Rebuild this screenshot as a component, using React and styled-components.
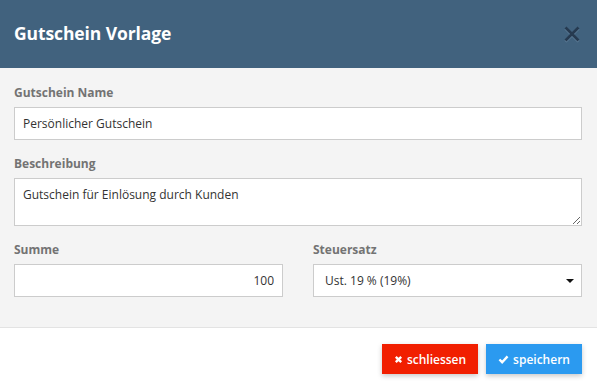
import React from "react";
import styled, { createGlobalStyle } from "styled-components";

const GlobalStyle = createGlobalStyle`
  html, body {
    margin: 0;
    padding: 0;
    background: #ffffff;
  }
  body {
    font-family: "Open Sans", "Liberation Sans", Arial, sans-serif;
  }
  * { box-sizing: border-box; }
`;

const Modal = styled.div`
  width: 597px;
  height: 388px;
  display: flex;
  flex-direction: column;
  background: #fff;
  overflow: hidden;
`;

const Header = styled.div`
  height: 68px;
  background-color: #41627e;
  display: flex;
  align-items: center;
  justify-content: space-between;
  padding: 0 17px 0 14px;
`;

const Title = styled.h4`
  margin: 0 0 2px 0;
  color: #fff;
  font-size: 17.5px;
  font-weight: 700;
  letter-spacing: -0.1px;
`;

const Close = styled.button`
  border: 0;
  background: transparent;
  padding: 0;
  width: 17px;
  height: 18px;
  display: flex;
  align-items: center;
  justify-content: center;
  cursor: pointer;
`;

const Body = styled.div`
  background-color: #f4f4f4;
  padding: 16px 15px 30px 14px;
  border-bottom: 1px solid #e3e3e3;
`;

const Group = styled.div`
  margin: ${props => props.margin ? props.margin : "0 0 15px 0"};
`;

const Row = styled.div`
  display: grid;
  grid-template-columns: 1fr 1fr;
  column-gap: 30px;
`;

const Label = styled.label`
  display: block;
  color: #737373;
  font-size: 12px;
  font-weight: 700;
  line-height: 17px;
  margin: 0 0 6px 0;
`;

const Input = styled.input`
  display: block;
  width: 100%;
  height: 33px;
  padding: 0 8px;
  border: 1px solid #cccccc;
  border-radius: 0;
  background: #fff;
  color: #333;
  font-family: inherit;
  font-size: 12px;
  text-align: ${props => props.right ? "right" : "left"};
  outline: none;
`;

const TextArea = styled.textarea`
  display: block;
  width: 100%;
  height: 48px;
  padding: 7px 8px;
  border: 1px solid #cccccc;
  border-radius: 0;
  background: #fff;
  color: #333;
  font-family: inherit;
  font-size: 12px;
  line-height: 17px;
  resize: vertical;
  outline: none;
`;

const Select = styled.div`
  height: 33px;
  display: flex;
  align-items: center;
  justify-content: space-between;
  padding: 0 7px 0 11px;
  border: 1px solid #cccccc;
  background: #fff;
  color: #333;
  font-size: 12px;
`;

const Caret = styled.span`
  width: 0;
  height: 0;
  border-left: 4px solid transparent;
  border-right: 4px solid transparent;
  border-top: 4px solid #111;
  margin-top: 1px;
`;

const Footer = styled.div`
  flex: 1;
  display: flex;
  justify-content: flex-end;
  align-items: flex-start;
  gap: 8px;
  padding: 16px 15px 0 0;
`;

const Button = styled.button`
  width: 96px;
  height: 30px;
  border: 0;
  border-radius: 0;
  background-color: ${props => props.bgColor};
  color: #fff;
  font-family: inherit;
  font-size: 12px;
  font-weight: 600;
  display: flex;
  align-items: center;
  justify-content: center;
  gap: 4px;
  box-shadow: 0 2px 5px rgba(0, 0, 0, 0.22);
  cursor: pointer;

  svg { flex: none; }
`;

export default function App() {
  return (
    <>
      <GlobalStyle />
      <Modal>
        <Header>
          <Title>Gutschein Vorlage</Title>
          <Close aria-label="close">
            <svg width="16" height="17" viewBox="0 0 16 17">
              <path d="M1.5 1.5 L14.5 14.5 M14.5 1.5 L1.5 14.5" stroke="#5f7f9b" strokeWidth="2.7" transform="translate(0 1)" />
              <path d="M1.5 1.5 L14.5 14.5 M14.5 1.5 L1.5 14.5" stroke="#263a50" strokeWidth="2.7" />
            </svg>
          </Close>
        </Header>

        <Body>
          <Group>
            <Label>Gutschein Name</Label>
            <Input defaultValue="Persönlicher Gutschein" />
          </Group>
          <Group>
            <Label>Beschreibung</Label>
            <TextArea defaultValue="Gutschein für Einlösung durch Kunden" />
          </Group>
          <Row>
            <Group margin="0">
              <Label>Summe</Label>
              <Input right defaultValue="100" />
            </Group>
            <Group margin="0">
              <Label>Steuersatz</Label>
              <Select>
                <span>Ust. 19 % (19%)</span>
                <Caret />
              </Select>
            </Group>
          </Row>
        </Body>

        <Footer>
          <Button bgColor="#f11f00">
            <svg width="9" height="9" viewBox="0 0 10 10">
              <path d="M2 2 L8 8 M8 2 L2 8" stroke="#fff" strokeWidth="2.6" />
            </svg>
            schliessen
          </Button>
          <Button bgColor="#2b9af0">
            <svg width="11" height="9" viewBox="0 0 12 10">
              <path d="M1.5 5 L4.5 8 L10.5 1.5" stroke="#fff" strokeWidth="2.6" fill="none" />
            </svg>
            speichern
          </Button>
        </Footer>
      </Modal>
    </>
  );
}
